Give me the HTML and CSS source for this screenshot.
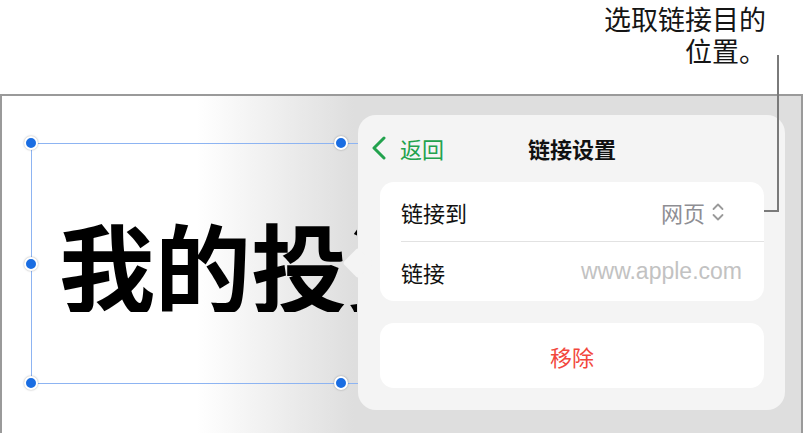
FILE: index.html
```html
<!DOCTYPE html>
<html lang="zh-CN">
<head>
    <meta charset="UTF-8">
    <meta name="viewport" content="width=device-width, initial-scale=1.0">
    <title>链接设置</title>
    <link rel="stylesheet" href="styles.css">
</head>
<body>
    <div class="callout">
        <p class="callout-text">选取链接目的<br>位置。</p>
        <div class="leader"></div>
    </div>
    <div class="screen">
        <!-- slide text box, selected -->
        <div class="textbox">
            <span class="slide-title">我的投资</span>
            <span class="handle h-tl"></span>
            <span class="handle h-tm"></span>
            <span class="handle h-ml"></span>
            <span class="handle h-bl"></span>
            <span class="handle h-bm"></span>
        </div>
        <!-- link settings popover -->
        <div class="popover">
            <div class="pop-arrow"></div>
            <div class="pop-header">
                <div class="back">
                    <svg width="16" height="24" viewBox="0 0 16 24"><path d="M13 2 L3 12 L13 22" fill="none" stroke="currentColor" stroke-width="3" stroke-linecap="round" stroke-linejoin="round"/></svg>
                    <span>返回</span>
                </div>
                <div class="pop-title">链接设置</div>
                <div></div>
            </div>
            <div class="group">
                <div class="row">
                    <span class="label">链接到</span>
                    <span class="value value-pick">网页
                        <svg width="14" height="20" viewBox="0 0 14 20"><path d="M2.5 7 L7 2.5 L11.5 7 M2.5 13 L7 17.5 L11.5 13" fill="none" stroke="currentColor" stroke-width="1.8" stroke-linecap="round" stroke-linejoin="round"/></svg>
                    </span>
                </div>
                <div class="row">
                    <span class="label">链接</span>
                    <span class="value value-url">www.apple.com</span>
                </div>
            </div>
            <div class="group">
                <div class="row row-action">移除</div>
            </div>
        </div>
    </div>
</body>
</html>
```

FILE: styles.css
```css
body {
    margin: 0;
    width: 804px;
    height: 433px;
    overflow: hidden;
    position: relative;
    background-color: #fff;
    font-family: "Noto Sans CJK SC", "Noto Sans", sans-serif;
    color: #111;
}
.callout {
    height: 94px;
    padding: 3px 38px 0 0;
    box-sizing: border-box;
}
.callout-text {
    margin: 0;
    text-align: right;
    font-size: 27px;
    line-height: 32px;
    color: #151515;
}
.leader {
    position: absolute;
    left: 764px;
    top: 55px;
    width: 13px;
    height: 155px;
    border-right: 2px solid #7a7a7a;
    border-bottom: 2px solid #7a7a7a;
    z-index: 5;
}
.screen {
    position: relative;
    height: 339px;
    margin-right: 1px;
    box-sizing: border-box;
    border: 2px solid #9a9a9a;
    border-bottom: none;
    background: linear-gradient(90deg, #fff 0, #fff 195px, #dedede 352px, #dedede 100%);
}
.textbox {
    position: absolute;
    left: 29px;
    top: 47px;
    width: 619px;
    height: 241px;
    box-sizing: border-box;
    border: 1px solid #8db4f2;
    display: flex;
    align-items: center;
    padding-left: 27px;
}
.slide-title {
    width: 298px;
    overflow: hidden;
    font-size: 96px;
    font-weight: 700;
    line-height: 1;
    color: #000;
    white-space: nowrap;
    margin-top: 0;
}
.handle {
    position: absolute;
    width: 10px;
    height: 10px;
    border-radius: 50%;
    background-color: #1a6de2;
    border: 2px solid #fff;
    box-shadow: 0 0 2px rgba(0, 0, 0, 0.35);
    transform: translate(-50%, -50%);
}
.h-tl { left: -1px; top: -1px; }
.h-tm { left: 309px; top: -1px; }
.h-ml { left: -1px; top: 50%; }
.h-bl { left: -1px; top: 100%; }
.h-bm { left: 309px; top: 100%; }
.popover {
    position: absolute;
    left: 356px;
    top: 19px;
    width: 427px;
    height: 295px;
    box-sizing: border-box;
    background-color: #f4f4f4;
    border-radius: 18px;
    padding: 0 21px 22px 22px;
    display: flex;
    flex-direction: column;
    gap: 22px;
    z-index: 2;
}
.pop-arrow {
    position: absolute;
    left: -11px;
    top: 137px;
    width: 22px;
    height: 22px;
    background-color: #f4f4f4;
    border-radius: 3px;
    transform: rotate(45deg);
}
.pop-header {
    height: 45px;
    margin: 0 -9px;
    display: grid;
    grid-template-columns: 1fr auto 1fr;
    align-items: end;
}
.back {
    display: flex;
    align-items: center;
    gap: 13px;
    color: #22a24d;
    font-size: 22px;
    line-height: 24px;
}
.pop-title {
    font-size: 22px;
    line-height: 24px;
    font-weight: 700;
    color: #111;
}
.group {
    background-color: #fff;
    border-radius: 14px;
}
.row {
    height: 59px;
    margin-left: 21px;
    padding-right: 22px;
    display: flex;
    align-items: center;
    justify-content: space-between;
    font-size: 22px;
}
.row + .row {
    border-top: 1px solid #e2e2e2;
}
.label {
    color: #111;
}
.value {
    color: #8e8e93;
}
.value-pick {
    display: flex;
    align-items: center;
    gap: 6px;
    margin-right: 17px;
}
.value-pick svg {
    color: #9a9a9a;
}
.value-url {
    font-family: "Liberation Sans", Arial, sans-serif;
    font-size: 23px;
    color: #c2c2c2;
}
.row-action {
    height: 65px;
    margin-left: 0;
    padding-right: 0;
    justify-content: center;
    color: #f2473c;
}
```
